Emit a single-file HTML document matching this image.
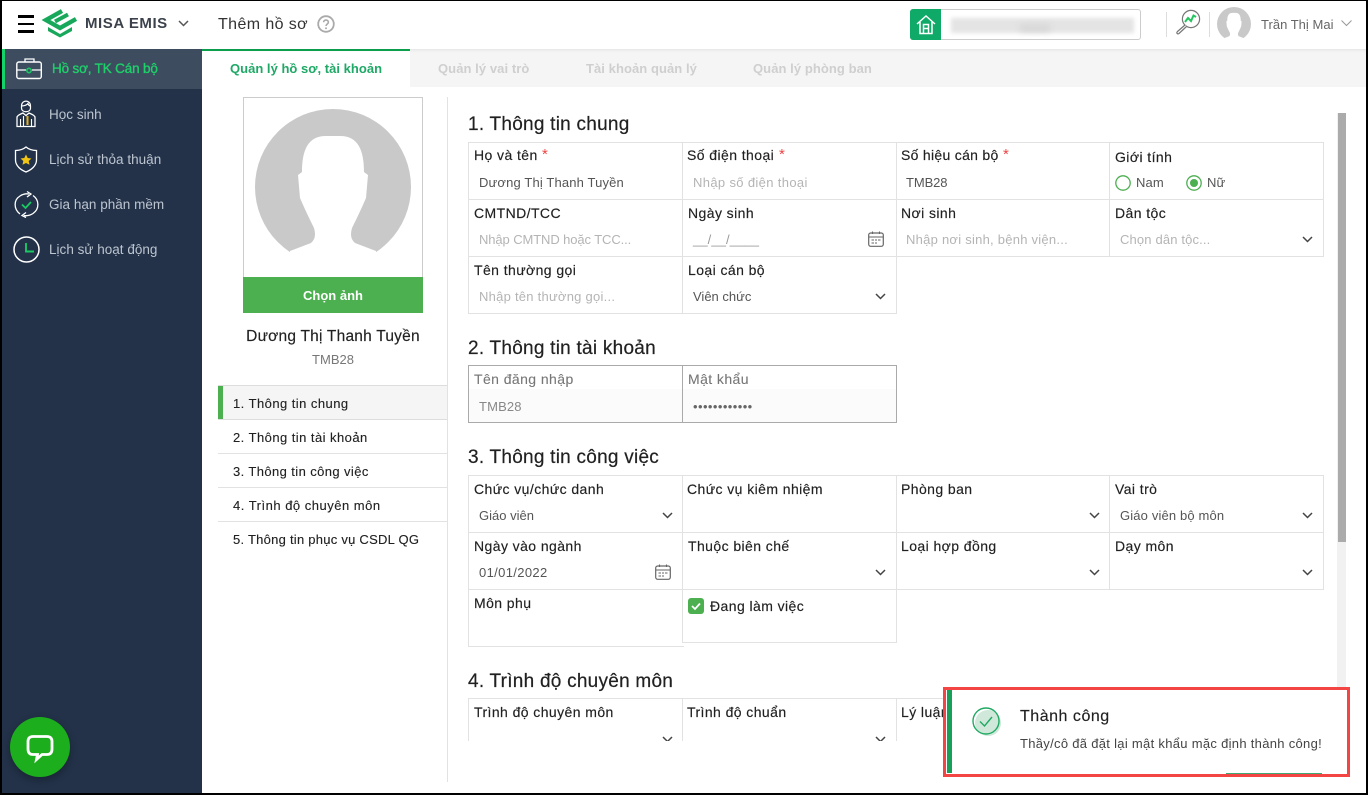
<!DOCTYPE html>
<html lang="vi"><head><meta charset="utf-8"><title>MISA EMIS</title>
<style>
html,body{margin:0;padding:0;width:1368px;height:795px;overflow:hidden;background:#fff;font-family:"Liberation Sans","Noto Sans CJK SC",sans-serif}
#p{position:relative;width:1368px;height:795px;overflow:hidden;background:#fff}
.a{position:absolute}
.t{position:absolute;white-space:nowrap;line-height:20px;height:20px}
.l{font-size:14px;color:#212121;letter-spacing:.42px;-webkit-text-stroke:.15px #212121}
.v{font-size:13px;color:#555;letter-spacing:.15px}
.ph{font-size:13px;color:#b4b4b4;letter-spacing:.25px}
.h{font-size:19px;color:#212121;letter-spacing:.25px;-webkit-text-stroke:.2px #212121}
.s{font-size:13.5px;color:#bcc5d0;letter-spacing:.02px;left:49px}
.m{font-size:13px;color:#212121;letter-spacing:.45px;left:233px;-webkit-text-stroke:.12px #212121}
.tab{font-size:13px;color:#cfcfcf;font-weight:bold;top:59px;letter-spacing:.07px}
.hl{position:absolute;background:#e2e2e2;height:1px}
.vl{position:absolute;background:#e2e2e2;width:1px}
.r{color:#ee4444;position:absolute;font-size:15px;line-height:15px}
svg{position:absolute;overflow:visible}
</style></head><body><div id="p">

<!-- tab bar + content -->
<div class="a" style="left:202px;top:49px;width:1166px;height:38px;background:#f5f5f5"></div>
<div class="a" style="left:202px;top:49px;width:208px;height:38px;background:#fff;border-top:2px solid #0ca550;box-sizing:border-box"></div>
<div class="t tab" style="left:230px;color:#1fa866;letter-spacing:.02px">Quản lý hồ sơ, tài khoản</div>
<div class="t tab" style="left:438px">Quản lý vai trò</div>
<div class="t tab" style="left:586px">Tài khoản quản lý</div>
<div class="t tab" style="left:753px">Quản lý phòng ban</div>

<!-- header -->
<div class="a" style="left:0;top:0;width:1368px;height:49px;background:#fff;box-shadow:0 1px 3px rgba(0,0,0,.08)"></div>
<div class="a" style="left:18px;top:15px;width:16px;height:2.5px;background:#000"></div>
<div class="a" style="left:18px;top:22.5px;width:16px;height:2.5px;background:#000"></div>
<div class="a" style="left:18px;top:30px;width:16px;height:2.5px;background:#000"></div>
<svg style="left:42px;top:9px" width="37" height="28" viewBox="0 0 37 28">
<path d="M20 2 L4 11 L18 19 L34 10" fill="none" stroke="#18a85b" stroke-width="4.400"/>
<path d="M26 5.500 L13 12.500" fill="none" stroke="#18a85b" stroke-width="4"/>
<path d="M6 18 L18 25 L30 18 L30 22 L18 28.500 L6 22 Z" fill="#18a85b"/>
</svg>
<div class="t" style="left:85px;top:14px;font-size:15px;font-weight:bold;color:#3c424c;letter-spacing:.55px">MISA EMIS</div>
<svg style="left:178px;top:20px" width="11" height="7" viewBox="0 0 11 7"><path d="M1 1 L5.500 5.500 L10 1" fill="none" stroke="#555" stroke-width="1.500"/></svg>
<div class="t" style="left:218px;top:15px;font-size:16px;color:#333;letter-spacing:.4px">Thêm hồ sơ</div>
<svg style="left:317px;top:15px" width="18" height="18" viewBox="0 0 18 18"><circle cx="9" cy="9" r="7.800" fill="none" stroke="#aaa" stroke-width="1.800"/><path d="M6.600 7.200 C6.600 4.400 11.400 4.400 11.400 7.200 C11.400 9 9 9 9 11" fill="none" stroke="#aaa" stroke-width="1.600"/><circle cx="9" cy="13.200" r="1" fill="#aaa"/></svg>

<!-- school box -->
<div class="a" style="left:910px;top:9px;width:231px;height:31px;border:1px solid #ccc;border-radius:3px;box-sizing:border-box;background:#fff"></div>
<div class="a" style="left:910px;top:9px;width:31px;height:31px;background:#0fa968;border-radius:3px 0 0 3px"></div>
<svg style="left:916px;top:14px" width="20" height="21" viewBox="0 0 20 21"><path d="M1 10 L10 2 L19 10 M4 8 V19.500 H16 V8 M7.500 19.500 V10.500 H12.500 V19.500 M7.500 14.500 H12.500" fill="none" stroke="#fff" stroke-width="1.500"/></svg>
<div class="a" style="left:951px;top:18px;width:183px;height:15px;background:#e4e4e4;filter:blur(2px)"></div>
<div class="a" style="left:1020px;top:24px;width:30px;height:8px;background:#d8d8d8;filter:blur(3px)"></div>
<div class="a" style="left:1166px;top:12px;width:1px;height:25px;background:#ddd"></div>
<div class="a" style="left:1209px;top:12px;width:1px;height:25px;background:#ddd"></div>
<svg style="left:1175px;top:9px" width="26" height="26" viewBox="0 0 26 26"><circle cx="16" cy="10" r="8.600" fill="#fff" stroke="#777" stroke-width="1.200"/><path d="M10 13 L13 9 L16 12 L18.500 6.500 L21 8" fill="none" stroke="#22c55e" stroke-width="2"/><path d="M10 16 L2.500 22.500 C1 24 2.500 25.500 4 24.500 L11.500 17.500" fill="#fff" stroke="#777" stroke-width="1.200"/></svg>
<svg style="left:1217px;top:7px" width="34" height="34" viewBox="255 109 156 156">
<circle cx="333" cy="187" r="78" fill="#c9c9c9"/><path d="M290 251 L311 243 Q317 238 314 228 Q306 212 300 198 L298 175 L302 172 C302 150 308 136 326 136 L340 136 C358 136 364 150 364 172 L368 175 L366 198 Q360 212 352 228 Q349 238 355 243 L376 251 L376 270 L290 270 Z" fill="#fff"/></svg>
<div class="t" style="left:1261px;top:15px;font-size:13px;color:#666;letter-spacing:.02px">Trần Thị Mai</div>
<svg style="left:1341px;top:20px" width="11" height="7" viewBox="0 0 11 7"><path d="M.5 .5 L5.500 5.500 L10.500 .5" fill="none" stroke="#999" stroke-width="1"/></svg>

<!-- sidebar -->
<div class="a" style="left:2px;top:49px;width:200px;height:746px;background:#233249"></div>
<div class="a" style="left:2px;top:49px;width:200px;height:40px;background:#3e4c60"></div>
<div class="a" style="left:2px;top:49px;width:3px;height:40px;background:#14d36a"></div>
<svg style="left:16px;top:58px" width="27" height="22" viewBox="0 0 27 22"><path d="M9 4 V1 H18 V4" fill="none" stroke="#fff" stroke-width="1.300"/><rect x=".8" y="4" width="24.500" height="16.500" rx="2" fill="none" stroke="#fff" stroke-width="1.400"/><path d="M1 12 H10 M16 12 H25" stroke="#fff" stroke-width="1.300"/><circle cx="13" cy="12.500" r="2.200" fill="none" stroke="#19c863" stroke-width="1.600"/></svg>
<div class="t" style="left:52px;top:59px;font-size:13.5px;color:#1ed069;-webkit-text-stroke:.35px #1ed069;letter-spacing:-.17px">Hồ sơ, TK Cán bộ</div>
<svg style="left:16px;top:100px" width="20" height="27" viewBox="0 0 20 27"><path d="M5.500 6 C5.500 -.5 14.500 -.5 14.500 6 V8 C14.500 13 5.500 13 5.500 8 Z M5.500 6 C8 6 11 5 12 3.500 C12.500 5 13.500 6 14.500 6" fill="none" stroke="#fff" stroke-width="1.200"/><path d="M1 26.500 V17.500 C1 15 5 14 7 13 L10 15.500 L13 13 C15 14 19 15 19 17.500 V26.500 Z" fill="none" stroke="#fff" stroke-width="1.300"/><path d="M4.500 19 V26 M7.500 16 V26 M15.500 19 V26" stroke="#fff" stroke-width="1.100"/><path d="M11.500 16 V25" stroke="#e3b11e" stroke-width="2"/></svg>
<div class="t s" style="top:105px">Học sinh</div>
<svg style="left:14px;top:146px" width="24" height="27" viewBox="0 0 24 27"><path d="M12 1 C15 3.500 19 4.500 22.500 4.500 V14 C22.500 20 17 24 12 26 C7 24 1.500 20 1.500 14 V4.500 C5 4.500 9 3.500 12 1 Z" fill="none" stroke="#fff" stroke-width="1.300"/><path d="M12 8.500 L13.700 12 L17.500 12.500 L14.700 15 L15.500 18.800 L12 17 L8.500 18.800 L9.300 15 L6.500 12.500 L10.300 12 Z" fill="#f2c414"/></svg>
<div class="t s" style="top:150px">Lịch sử thỏa thuận</div>
<svg style="left:14px;top:191px" width="25" height="27" viewBox="0 0 25 27"><path d="M6 23 C-.5 18 -.5 9 6 5 M19 4.500 C25.500 9 25.500 18 19 22.500 M6 5 C9 3 12 2.500 15 3 M19 22.500 C16 24.500 13 25 10 24.500" fill="none" stroke="#fff" stroke-width="1.300"/><path d="M13 .5 L17 3 L13 6 M12 21.500 L8 24.500 L12 26.500" fill="none" stroke="#fff" stroke-width="1.300"/><path d="M8 13.500 L11.500 17 L17 11" fill="none" stroke="#19c863" stroke-width="1.800"/></svg>
<div class="t s" style="top:195px">Gia hạn phần mềm</div>
<svg style="left:13px;top:236px" width="27" height="27" viewBox="0 0 27 27"><circle cx="13.500" cy="13.500" r="12.500" fill="none" stroke="#fff" stroke-width="1.500"/><path d="M13 7 V15.500 H21" fill="none" stroke="#19c863" stroke-width="1.900"/></svg>
<div class="t s" style="top:240px">Lịch sử hoạt động</div>

<!-- chat -->
<div class="a" style="left:10px;top:717px;width:60px;height:60px;border-radius:50%;background:#1cae1c;box-shadow:0 3px 8px rgba(0,0,0,.3)"></div>
<svg style="left:26px;top:734px" width="28" height="28" viewBox="0 0 28 28"><path d="M7 2.500 H21 C24.500 2.500 26 4.500 26 7.500 V15 C26 18.500 24.500 20.500 21 20.500 H16 L10.500 25.500 L11.500 20.500 H7 C3.500 20.500 2 18.500 2 15 V7.500 C2 4.500 3.500 2.500 7 2.500 Z" fill="none" stroke="#fff" stroke-width="2.800"/></svg>

<!-- profile -->
<div class="a" style="left:243px;top:97px;width:180px;height:181px;border:1px solid #ccc;box-sizing:border-box"></div>
<svg style="left:0;top:0" width="1368" height="795" viewBox="0 0 1368 795"><circle cx="333" cy="187" r="78" fill="#c9c9c9"/><path d="M290 251 L311 243 Q317 238 314 228 Q306 212 300 198 L298 175 L302 172 C302 150 308 136 326 136 L340 136 C358 136 364 150 364 172 L368 175 L366 198 Q360 212 352 228 Q349 238 355 243 L376 251 L376 270 L290 270 Z" fill="#fff"/></svg>
<div class="a" style="left:243px;top:277px;width:180px;height:36px;background:#4caf50"></div>
<div class="t" style="left:243px;width:180px;text-align:center;top:286px;font-size:13px;font-weight:bold;color:#fff">Chọn ảnh</div>
<div class="t" style="left:203px;width:260px;text-align:center;top:327px;font-size:15.500px;color:#212121;letter-spacing:.22px;-webkit-text-stroke:.15px #212121">Dương Thị Thanh Tuyền</div>
<div class="t" style="left:243px;width:180px;text-align:center;top:350px;font-size:13px;color:#777">TMB28</div>

<div class="a" style="left:218px;top:385px;width:229px;height:34px;background:#f5f5f5"></div>
<div class="a" style="left:218px;top:385px;width:5px;height:35px;background:#4caf50"></div>
<div class="hl" style="left:218px;top:385px;width:229px;background:#ddd"></div>
<div class="hl" style="left:218px;top:419px;width:229px;background:#ddd"></div>
<div class="hl" style="left:218px;top:453px;width:229px"></div>
<div class="hl" style="left:218px;top:487px;width:229px"></div>
<div class="hl" style="left:218px;top:521px;width:229px"></div>
<div class="t m" style="top:394px">1. Thông tin chung</div>
<div class="t m" style="top:428px">2. Thông tin tài khoản</div>
<div class="t m" style="top:462px;letter-spacing:.4px">3. Thông tin công việc</div>
<div class="t m" style="top:496px;letter-spacing:.5px">4. Trình độ chuyên môn</div>
<div class="t m" style="top:530px;letter-spacing:.25px">5. Thông tin phục vụ CSDL QG</div>
<div class="vl" style="left:447px;top:97px;height:685px"></div>

<!-- scrollbar -->
<div class="a" style="left:1337px;top:113px;width:9px;height:574px;background:#f1f1f1"></div>
<div class="a" style="left:1338px;top:113px;width:8px;height:429px;background:#ababab"></div>

<!-- section 1 -->
<div class="t h" style="left:468px;top:115px">1. Thông tin chung</div>
<div class="hl" style="left:468px;top:142px;width:856px"></div>
<div class="hl" style="left:468px;top:199px;width:856px"></div>
<div class="hl" style="left:468px;top:256px;width:856px"></div>
<div class="hl" style="left:468px;top:313px;width:429px"></div>
<div class="vl" style="left:468px;top:142px;height:172px"></div>
<div class="vl" style="left:682px;top:142px;height:172px"></div>
<div class="vl" style="left:896px;top:142px;height:172px"></div>
<div class="vl" style="left:1109px;top:142px;height:114px"></div>
<div class="vl" style="left:1323px;top:142px;height:114px"></div>

<div class="t l" style="left:474px;top:145px">Họ và tên</div><span class="r" style="left:542px;top:147px">*</span>
<div class="t l" style="left:687px;top:145px">Số điện thoại</div><span class="r" style="left:779px;top:147px">*</span>
<div class="t l" style="left:901px;top:145px;letter-spacing:.3px">Số hiệu cán bộ</div><span class="r" style="left:1003px;top:147px">*</span>
<div class="t l" style="left:1115px;top:147px">Giới tính</div>
<div class="t v" style="left:479px;top:173px">Dương Thị Thanh Tuyền</div>
<div class="t ph" style="left:693px;top:173px;letter-spacing:.35px">Nhập số điện thoại</div>
<div class="t v" style="left:906px;top:173px;letter-spacing:-.1px">TMB28</div>
<svg style="left:1115px;top:175px" width="16" height="16"><circle cx="8" cy="8" r="7.200" fill="none" stroke="#4caf50" stroke-width="1.300"/></svg>
<div class="t v" style="left:1136px;top:173px">Nam</div>
<svg style="left:1186px;top:175px" width="16" height="16"><circle cx="8" cy="8" r="7.200" fill="none" stroke="#4caf50" stroke-width="1.300"/><circle cx="8" cy="8" r="4" fill="#4caf50"/></svg>
<div class="t v" style="left:1207px;top:173px">Nữ</div>

<div class="t l" style="left:474px;top:203px">CMTND/TCC</div>
<div class="t l" style="left:688px;top:203px">Ngày sinh</div>
<div class="t l" style="left:901px;top:203px">Nơi sinh</div>
<div class="t l" style="left:1115px;top:203px">Dân tộc</div>
<div class="t ph" style="left:479px;top:230px;letter-spacing:-.1px">Nhập CMTND hoặc TCC...</div>
<div class="t ph" style="left:693px;top:230px;color:#999;letter-spacing:.1px">__/__/____</div>
<svg style="left:868px;top:231px" width="16" height="16" viewBox="0 0 16 16"><rect x=".7" y="2" width="14.600" height="13.300" rx="2" fill="none" stroke="#666" stroke-width="1.200"/><path d="M1 6 H15 M4.500 .5 V3 M11.500 .5 V3 M3.500 9 H6 M7 9 H9 M10 9 H12.500 M3.500 12 H6 M7 12 H9" stroke="#666" stroke-width="1.100"/></svg>
<div class="t ph" style="left:906px;top:230px">Nhập nơi sinh, bệnh viện...</div>
<div class="t ph" style="left:1120px;top:230px;letter-spacing:.15px">Chọn dân tộc...</div>
<svg style="left:1302px;top:236px" width="11" height="7" viewBox="0 0 11 7"><path d="M1 1 L5.500 5.500 L10 1" fill="none" stroke="#444" stroke-width="1.500"/></svg>

<div class="t l" style="left:474px;top:260px">Tên thường gọi</div>
<div class="t l" style="left:688px;top:260px">Loại cán bộ</div>
<div class="t ph" style="left:479px;top:287px">Nhập tên thường gọi...</div>
<div class="t v" style="left:693px;top:287px;letter-spacing:0">Viên chức</div>
<svg style="left:875px;top:293px" width="11" height="7" viewBox="0 0 11 7"><path d="M1 1 L5.500 5.500 L10 1" fill="none" stroke="#444" stroke-width="1.500"/></svg>

<!-- section 2 -->
<div class="t h" style="left:468px;top:339px">2. Thông tin tài khoản</div>
<div class="a" style="left:468px;top:365px;width:429px;height:58px;border:1px solid #aaa;box-sizing:border-box"></div>
<div class="a" style="left:469px;top:389px;width:427px;height:33px;background:#fbfbfb"></div>
<div class="vl" style="left:682px;top:365px;height:58px;background:#aaa"></div>
<div class="t l" style="left:474px;top:369px;color:#777;-webkit-text-stroke:.1px #777">Tên đăng nhập</div>
<div class="t l" style="left:688px;top:369px;color:#777;-webkit-text-stroke:.1px #777">Mật khẩu</div>
<div class="t v" style="left:479px;top:397px;color:#888">TMB28</div>
<div class="t v" style="left:693px;top:397px;color:#666;letter-spacing:.42px">••••••••••••</div>

<!-- section 3 -->
<div class="t h" style="left:468px;top:448px">3. Thông tin công việc</div>
<div class="hl" style="left:468px;top:475px;width:856px"></div>
<div class="hl" style="left:468px;top:532px;width:856px"></div>
<div class="hl" style="left:468px;top:589px;width:856px"></div>
<div class="hl" style="left:468px;top:646px;width:216px"></div>
<div class="hl" style="left:682px;top:642px;width:215px"></div>
<div class="vl" style="left:468px;top:475px;height:171px"></div>
<div class="vl" style="left:682px;top:475px;height:168px"></div>
<div class="vl" style="left:896px;top:475px;height:168px"></div>
<div class="vl" style="left:1109px;top:475px;height:114px"></div>
<div class="vl" style="left:1323px;top:475px;height:114px"></div>
<div class="t l" style="left:474px;top:479px">Chức vụ/chức danh</div>
<div class="t l" style="left:687px;top:479px">Chức vụ kiêm nhiệm</div>
<div class="t l" style="left:901px;top:479px">Phòng ban</div>
<div class="t l" style="left:1115px;top:479px">Vai trò</div>
<div class="t v" style="left:479px;top:506px;letter-spacing:0">Giáo viên</div>
<div class="t v" style="left:1120px;top:506px">Giáo viên bộ môn</div>
<svg style="left:662px;top:512px" width="11" height="7" viewBox="0 0 11 7"><path d="M1 1 L5.500 5.500 L10 1" fill="none" stroke="#444" stroke-width="1.500"/></svg>
<svg style="left:1089px;top:512px" width="11" height="7" viewBox="0 0 11 7"><path d="M1 1 L5.500 5.500 L10 1" fill="none" stroke="#444" stroke-width="1.500"/></svg>
<svg style="left:1302px;top:512px" width="11" height="7" viewBox="0 0 11 7"><path d="M1 1 L5.500 5.500 L10 1" fill="none" stroke="#444" stroke-width="1.500"/></svg>

<div class="t l" style="left:474px;top:536px">Ngày vào ngành</div>
<div class="t l" style="left:688px;top:536px">Thuộc biên chế</div>
<div class="t l" style="left:901px;top:536px">Loại hợp đồng</div>
<div class="t l" style="left:1115px;top:536px">Dạy môn</div>
<div class="t v" style="left:479px;top:563px;letter-spacing:.35px">01/01/2022</div>
<svg style="left:655px;top:564px" width="16" height="16" viewBox="0 0 16 16"><rect x=".7" y="2" width="14.600" height="13.300" rx="2" fill="none" stroke="#666" stroke-width="1.200"/><path d="M1 6 H15 M4.500 .5 V3 M11.500 .5 V3 M3.500 9 H6 M7 9 H9 M10 9 H12.500 M3.500 12 H6 M7 12 H9" stroke="#666" stroke-width="1.100"/></svg>
<svg style="left:875px;top:569px" width="11" height="7" viewBox="0 0 11 7"><path d="M1 1 L5.500 5.500 L10 1" fill="none" stroke="#444" stroke-width="1.500"/></svg>
<svg style="left:1089px;top:569px" width="11" height="7" viewBox="0 0 11 7"><path d="M1 1 L5.500 5.500 L10 1" fill="none" stroke="#444" stroke-width="1.500"/></svg>
<svg style="left:1302px;top:569px" width="11" height="7" viewBox="0 0 11 7"><path d="M1 1 L5.500 5.500 L10 1" fill="none" stroke="#444" stroke-width="1.500"/></svg>

<div class="t l" style="left:474px;top:593px">Môn phụ</div>
<svg style="left:688px;top:598px" width="16" height="16" viewBox="0 0 16 16"><rect width="16" height="16" rx="3" fill="#4caf50"/><path d="M4 8 L7 11 L12 5.500" fill="none" stroke="#fff" stroke-width="1.800"/></svg>
<div class="t l" style="left:710px;top:596px">Đang làm việc</div>

<!-- section 4 -->
<div class="t h" style="left:468px;top:672px">4. Trình độ chuyên môn</div>
<div class="hl" style="left:468px;top:698px;width:560px"></div>
<div class="vl" style="left:468px;top:698px;height:43px"></div>
<div class="vl" style="left:682px;top:698px;height:43px"></div>
<div class="vl" style="left:896px;top:698px;height:43px"></div>
<div class="t l" style="left:474px;top:702px">Trình độ chuyên môn</div>
<div class="t l" style="left:687px;top:702px">Trình độ chuẩn</div>
<div class="t l" style="left:901px;top:702px">Lý luận</div>
<svg style="left:662px;top:736px" width="11" height="7" viewBox="0 0 11 7"><path d="M1 1 L5.500 5.500 L10 1" fill="none" stroke="#444" stroke-width="1.500"/></svg>
<svg style="left:875px;top:736px" width="11" height="7" viewBox="0 0 11 7"><path d="M1 1 L5.500 5.500 L10 1" fill="none" stroke="#444" stroke-width="1.500"/></svg>
<div class="a" style="left:448px;top:741px;width:889px;height:54px;background:#fff"></div>

<!-- toast -->
<div class="a" style="left:943px;top:687px;width:407px;height:90px;border:3px solid #f44545;box-sizing:border-box;background:#fff"></div>
<div class="a" style="left:947px;top:690px;width:5px;height:83px;background:#18a058"></div>
<div class="a" style="left:1226px;top:773px;width:96px;height:1px;background:#3fa873"></div>
<svg style="left:971px;top:706px" width="32" height="32" viewBox="0 0 32 32"><circle cx="17" cy="17" r="13" fill="#cfe8da"/><circle cx="15" cy="15" r="13" fill="none" stroke="#1faa63" stroke-width="1.400"/><path d="M9 15.500 L13.500 20 L21 11" fill="none" stroke="#1faa63" stroke-width="1.400"/></svg>
<div class="t" style="left:1020px;top:707px;font-size:16px;color:#212121;letter-spacing:.52px;-webkit-text-stroke:.15px #212121">Thành công</div>
<div class="t" style="left:1020px;top:734px;font-size:13px;color:#444;letter-spacing:.3px">Thầy/cô đã đặt lại mật khẩu mặc định thành công!</div>

<!-- window frame -->
<div class="a" style="left:0;top:0;width:1368px;height:1px;background:#000"></div>
<div class="a" style="left:0;top:0;width:2px;height:795px;background:#000"></div>
<div class="a" style="left:1366px;top:0;width:2px;height:795px;background:#000"></div>
<div class="a" style="left:0;top:793px;width:1368px;height:2px;background:#000"></div>
</div></body></html>
